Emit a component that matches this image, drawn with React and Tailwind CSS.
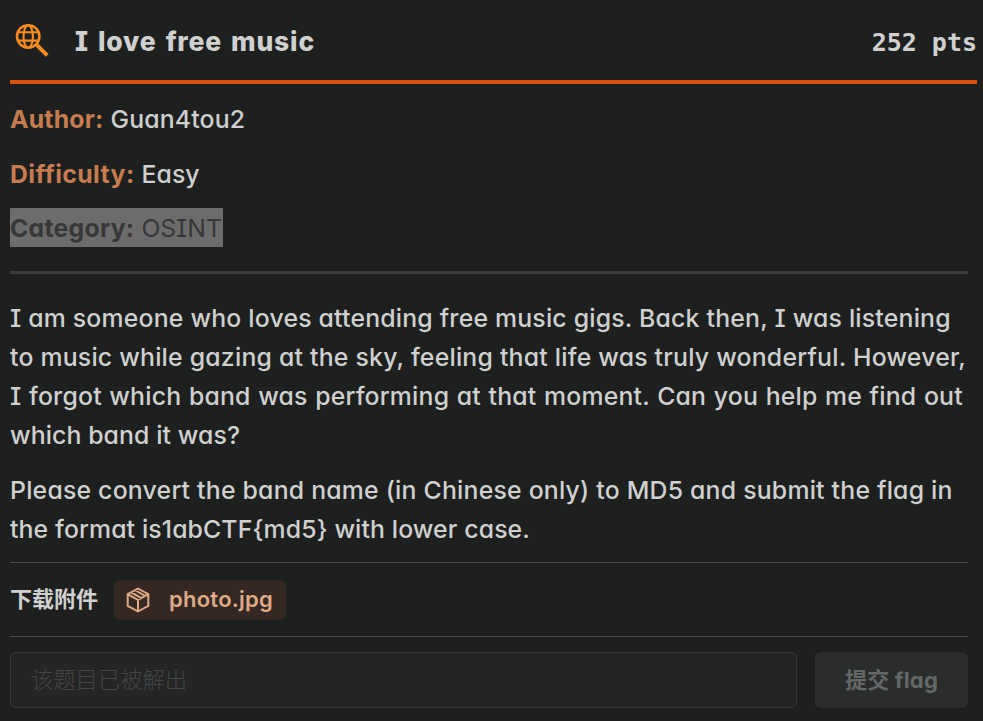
import React from 'react';

const sans = "font-['Inter','Noto_Sans_CJK_SC',sans-serif] [font-feature-settings:'cv08','cv11']";
const body = [
  ['I am someone who loves attending free music gigs. Back then, I was listening', 'tracking-[0.2px]'],
  ['to music while gazing at the sky, feeling that life was truly wonderful. However,', 'tracking-[0.22px]'],
  ['I forgot which band was performing at that moment. Can you help me find out', 'tracking-[0.2px] [word-spacing:0.75px]'],
  ['which band it was?', 'tracking-[0.1px]'],
];
const more = [
  ['Please convert the band name (in Chinese only) to MD5 and submit the flag in', 'tracking-[0.22px]'],
  ['the format is1abCTF{md5} with lower case.', 'tracking-[0.12px]'],
];
const marks = [-200, 302, 804].flatMap((x) => [113, 282, 451, 620, 789].map((y) => ({ x, y })));

function Watermark() {
  return (
    <svg className="pointer-events-none absolute inset-0 h-[721px] w-[983px]" aria-hidden="true">
      {marks.map(({ x, y }) => (
        <text key={`${x}-${y}`} transform={`translate(${x - 4} ${y + 8}) rotate(-11.7)`} className="fill-white/[0.014] font-['DejaVu_Sans_Mono',monospace] text-[20px] font-normal">
          01994b1a-43b7-7533-ba68-c25547ba88d0
        </text>
      ))}
    </svg>
  );
}

function SearchGlobe() {
  return (
    <svg className="mt-px h-[34px] w-[34px] shrink-0" viewBox="0 0 34 34" fill="none" stroke="#f88c22" strokeWidth="2.1">
      <circle cx="13.2" cy="12.4" r="11.2" strokeWidth="2.5" />
      <ellipse cx="13.2" cy="12.4" rx="4.7" ry="11.2" />
      <path d="M3 8.2h20.4M3 16.6h20.4" />
      <path d="m21.2 20.4 11 11" strokeWidth="3.9" />
    </svg>
  );
}

function PackageIcon() {
  return (
    <svg className="h-[26px] w-6 shrink-0" viewBox="0 0 24 26" fill="none" stroke="#dfaa88" strokeWidth="2" strokeLinejoin="round">
      <path d="M12 1.5 22.3 7.2v11.6L12 24.5 1.7 18.8V7.2zM1.7 7.2 12 13l10.3-5.8M12 13v11.5M5.1 5.4l10.3 5.8M9 3.2l10.3 5.8" />
    </svg>
  );
}

export default function App() {
  return (
    <main className={`${sans} relative flex h-[721px] w-[983px] flex-col overflow-hidden bg-[#1e201f] pl-[10px] text-[24.8px] font-medium text-[#cfd0cf]`}>
      <header className="mr-[6px] flex h-[84px] items-center border-b-4 border-[#d9520d] pl-[5px]">
        <SearchGlobe />
        <h1 className="mt-[4px] ml-[26px] whitespace-nowrap text-[26.5px] font-extrabold tracking-[0.8px] [word-spacing:2.6px]">I love free music</h1>
        <span className="mt-[5px] ml-auto whitespace-nowrap font-['DejaVu_Sans_Mono',monospace] text-[25px] font-bold">252 pts</span>
      </header>
      <div className="mt-[16px] flex h-[39px] items-center gap-[7px] whitespace-nowrap"><b className="tracking-[0.2px] text-[#c67b50]">Author:</b><span className="tracking-[0.15px]">Guan4tou2</span></div>
      <div className="mt-[16px] flex h-[39px] items-center gap-[7px] whitespace-nowrap"><b className="tracking-[0.4px] text-[#c67b50]">Difficulty:</b><span>Easy</span></div>
      <div className="mt-[14px] flex h-[39px] w-[213px] items-center gap-[7px] whitespace-nowrap bg-[#6c6c6c] pt-[2px] text-[#373737]"><b className="tracking-[0.25px]">Category:</b><span className="font-normal">OSINT</span></div>
      <hr className="mt-[24px] mr-[15px] border-t-[3px] border-[#3b3c3c]" />
      <div className="mt-[25px] leading-[39px]">
        {body.map(([l, t]) => <p key={l} className={`whitespace-nowrap ${t}`}>{l}</p>)}
      </div>
      <div className="mt-[16px] leading-[39px]">
        {more.map(([l, t]) => <p key={l} className={`whitespace-nowrap ${t}`}>{l}</p>)}
      </div>
      <section className="mt-[13px] mr-[15px] flex h-[75px] items-center border-y border-[#4b4c4c]">
        <span className="text-[22px] font-bold">下载附件</span>
        <div className="ml-4 flex h-10 w-[172px] items-center rounded-md bg-[#352822] pl-3 text-[#dfaa88]">
          <PackageIcon /><span className="ml-[19px] text-[22px] font-semibold tracking-[0.25px]">photo.jpg</span>
        </div>
      </section>
      <form className="mt-[15px] mr-[15px] flex gap-[18px]">
        <div className="flex h-14 w-[787px] items-center rounded-md border border-[#363838] bg-[#252525] pl-5 text-[22.3px] font-light text-[#434646]">该题目已被解出</div>
        <button type="button" className="h-14 w-[153px] rounded-md bg-[#2b2d2d] text-[22px] font-bold tracking-[0.2px] text-[#646768]">提交 flag</button>
      </form>
      <Watermark />
    </main>
  );
}
